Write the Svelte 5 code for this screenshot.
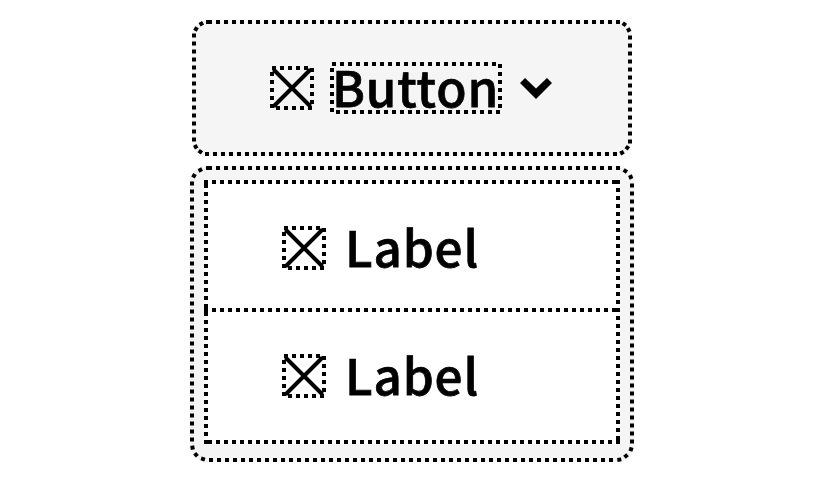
<script>
  // Dotted rounded outlines: straight sides plus individually placed corner dots
  const frames = {
    button: {
      w: 440, h: 136,
      d: 'M14 2H17M16 2H428M438 15.5V123.6M13 134H425M2 13.5V121.6',
      dots: [[4, 9], [9.3, 3.7], [432.3, 4.3], [436.7, 10], [435.3, 127.7], [430, 132.7], [8.3, 131.7], [3.7, 126.7]]
    },
    menu: {
      w: 444, h: 296,
      d: 'M16 2H19M18 2H430M442 17.5V277.6M19 294H423M2 15.5V275.6',
      dots: [[4, 9.7], [10.3, 4], [435.3, 5], [440.7, 11], [441, 283.3], [436, 290], [429.3, 293.7], [13, 293], [6, 288.7], [2.5, 281.7]]
    }
  };

  function turn([x, y], f) {
    const cx = x < f.w / 2 ? 17 : f.w - 17;
    const cy = y < f.h / 2 ? 17 : f.h - 17;
    return (Math.atan2(y - cy, x - cx) * 180) / Math.PI;
  }
</script>

{#snippet frame(f)}
  <svg class="frame" width={f.w} height={f.h}>
    <path class="dots" d={f.d} />
    {#each f.dots as p}
      <rect x="-2" y="-2" width="4" height="4" transform="translate({p[0]} {p[1]}) rotate({turn(p, f)})" />
    {/each}
  </svg>
{/snippet}

{#snippet cross()}
  <svg class="cross" width="44" height="44" viewBox="0 0 44 44">
    <path class="dots" d="M2 2H42V42H2Z" />
    <path class="line" d="M3.5 3.5L40.5 40.5M40.5 3.5L3.5 40.5" />
  </svg>
{/snippet}

<main>
  <button>
    {@render frame(frames.button)}
    {@render cross()}
    <span class="caption">
      <svg class="frame" width="172" height="52"><path class="dots" d="M2 2H170V50H2Z" /></svg>
      <span class="text">Button</span>
    </span>
    <svg class="chevron" width="32" height="21" viewBox="0 0 32 21"><path d="M0 5L5 0L16 10.5L27 0L32 5L16 21Z" /></svg>
  </button>
  <div class="menu">
    {@render frame(frames.menu)}
    <div class="list">
      <svg class="frame" width="416" height="264">
        <path class="dots" d="M0 2H416M2 4V264M414 0V264M0 130H416M4 262H416" />
      </svg>
      <div class="item">{@render cross()}<span class="text">Label</span></div>
      <div class="item">{@render cross()}<span class="text">Label</span></div>
    </div>
  </div>
</main>

<style>
  :global(body) { background: #fff; }
  main { box-sizing: border-box; height: 480px; padding: 20px 0 0 190px; font: 500 49.4px/50px "Noto Sans CJK SC", "Noto Sans CJK JP", sans-serif; color: #000; }
  button { position: relative; display: flex; align-items: flex-start; box-sizing: border-box; width: 440px; height: 136px; margin: 0 0 0 2px; padding: 42px 0 0 78px; border: 0; border-radius: 16px; background: #f5f5f5; font: inherit; color: inherit; text-align: left; }
  .frame { position: absolute; left: 0; top: 0; overflow: visible; }
  .cross { flex: none; margin-top: 4px; overflow: visible; }
  .dots { fill: none; stroke: #000; stroke-width: 4; stroke-dasharray: 4 4; }
  .line { fill: none; stroke: #000; stroke-width: 4; }
  .text { display: block; letter-spacing: 0.85px; -webkit-text-stroke: 0.75px #000; }
  .caption { position: relative; box-sizing: border-box; width: 172px; height: 52px; margin-left: 16px; padding-left: 2px; }
  .caption .text { margin-top: -1px; }
  .chevron { margin: 16px 0 0 18px; }
  .menu { position: relative; box-sizing: border-box; width: 444px; height: 296px; margin-top: 10px; padding: 14px; border-radius: 16px; background: #f5f5f5; }
  .list { position: relative; width: 416px; height: 264px; background: #fff; }
  .item { display: flex; align-items: flex-start; box-sizing: border-box; height: 128px; padding: 42px 0 0 78px; }
  .item .text { margin: -1px 0 0 19px; }
</style>
